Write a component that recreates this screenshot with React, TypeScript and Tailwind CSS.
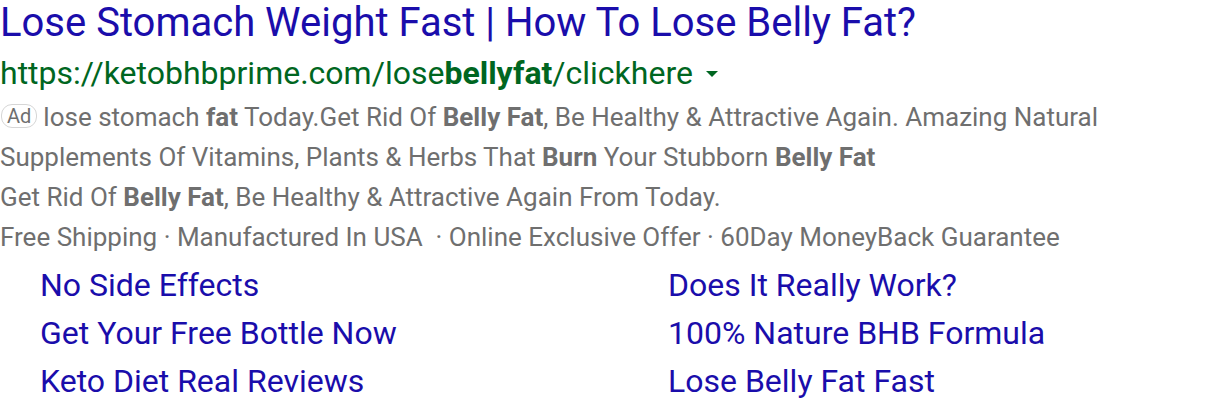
const sitelinks = [
  ["No Side Effects", "Does It Really Work?"],
  ["Get Your Free Bottle Now", "100% Nature BHB Formula"],
  ["Keto Diet Real Reviews", "Lose Belly Fat Fast"],
];

export default function App() {
  return (
    <div className="w-[1216px] h-[410px] bg-white font-['Roboto',sans-serif] overflow-hidden">
      <h3 className="text-[40px] leading-[46px] text-[#1a0dab] whitespace-nowrap">
        Lose Stomach Weight Fast | How To Lose Belly Fat?
      </h3>
      <div className="flex items-center text-[32px] leading-[32px] text-[#006621] mt-[11px]">
        <span>
          https://ketobhbprime.com/lose<b className="font-bold">bellyfat</b>/clickhere
        </span>
        <span className="ml-[13px] mt-[2px] w-0 h-0 border-x-[6px] border-x-transparent border-t-[6px] border-t-[#006621]" />
      </div>
      <div className="text-[26px] leading-[40px] text-[#6f6f6f] mt-[8px]">
        <p>
          <span className="inline-block align-[3px] mr-[6px] ml-[1px] px-[5px] text-[20px] leading-[22px] border border-[#d6d6d6] rounded-[11px]">
            Ad
          </span>
          lose stomach <b>fat</b> Today.Get Rid Of <b>Belly Fat</b>, Be Healthy &amp; Attractive Again. Amazing Natural
        </p>
        <p>
          Supplements Of Vitamins, Plants &amp; Herbs That <b>Burn</b> Your Stubborn <b>Belly Fat</b>
        </p>
        <p>
          Get Rid Of <b>Belly Fat</b>, Be Healthy &amp; Attractive Again From Today.
        </p>
        <p>Free Shipping · Manufactured In USA &nbsp;· Online Exclusive Offer · 60Day MoneyBack Guarantee</p>
      </div>
      <div className="grid grid-cols-[628px_1fr] pl-[40px] mt-[4px] text-[32px] leading-[48px] text-[#1a0dab]">
        {sitelinks.map(([a, b]) => (
          <>
            <div key={a}>{a}</div>
            <div key={b}>{b}</div>
          </>
        ))}
      </div>
    </div>
  );
}
